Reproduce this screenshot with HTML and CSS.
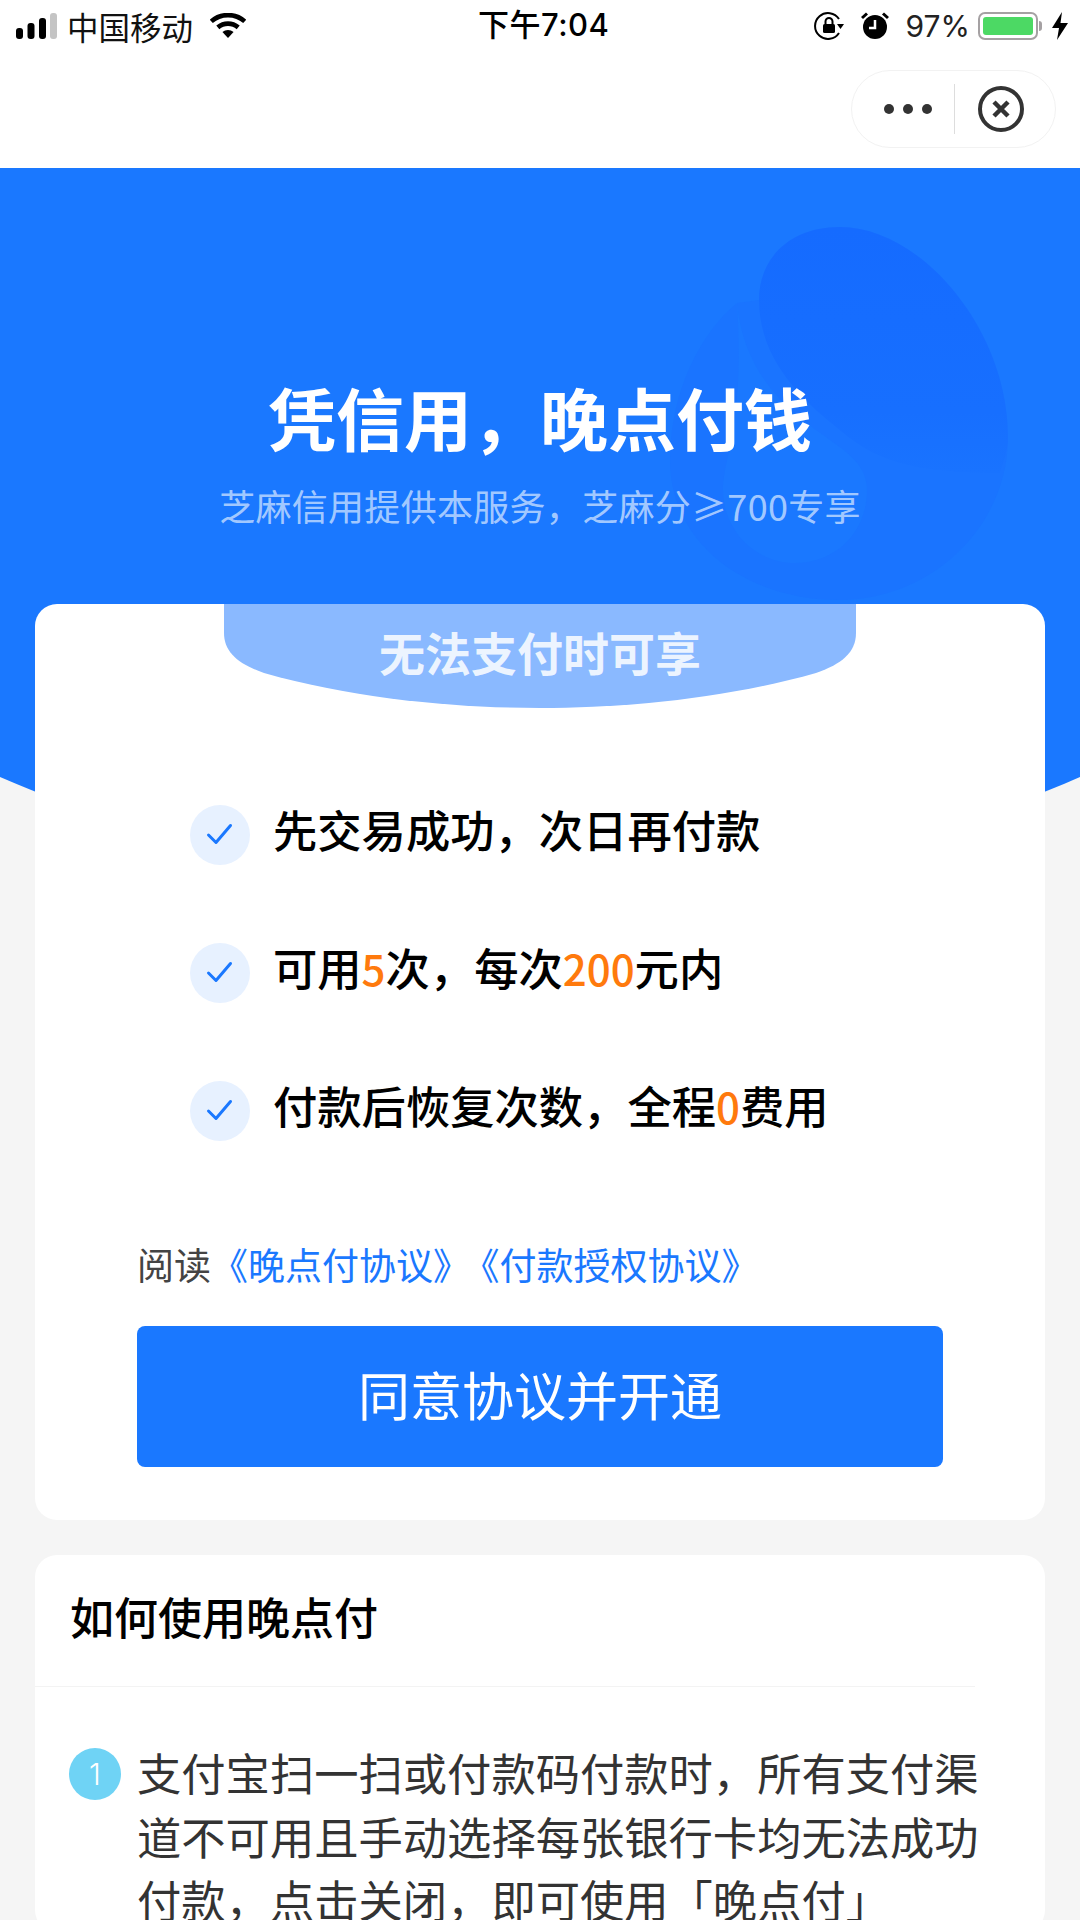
FILE: index.html
```html
<!DOCTYPE html>
<html lang="zh-CN">
<head>
  <meta charset="UTF-8">
  <meta name="viewport" content="width=device-width, initial-scale=1.0">
  <title>晚点付</title>
  <link rel="stylesheet" href="styles.css">
</head>
<body>
  <!-- Status bar -->
  <div class="status-bar">
    <div class="status-group">
      <svg class="signal" viewBox="0 0 41 26" width="41" height="26">
        <rect x="0" y="15" width="7" height="11" rx="3" fill="#000"/>
        <rect x="11.500" y="10" width="7" height="16" rx="3" fill="#000"/>
        <rect x="23" y="5" width="7" height="21" rx="3" fill="#000"/>
        <rect x="34" y="0" width="7" height="26" rx="3" fill="#c4c4c4"/>
      </svg>
      <span class="carrier">中国移动</span>
      <svg class="wifi" viewBox="0 0 38 28" width="36" height="26">
        <path d="M1 9C11 0 27 0 37 9" fill="none" stroke="#000" stroke-width="5"/>
        <path d="M8 15.500C14.500 10 23.500 10 30 15.500" fill="none" stroke="#000" stroke-width="5"/>
        <path d="M13 20.500C16.500 17.500 21.500 17.500 25 20.500L19 27Z" fill="#000"/>
      </svg>
    </div>
    <div class="clock">下午7:04</div>
    <div class="status-group status-right">
      <svg class="rotation-lock" viewBox="0 0 30 30" width="30" height="30">
        <path d="M25 8A13 13 0 1 0 25 22" fill="none" stroke="#000" stroke-width="2"/>
        <path d="M23 13H30L26.500 18Z" fill="#000"/>
        <rect x="9" y="13" width="12" height="9" rx="1.500" fill="#000"/>
        <path d="M11.500 13V10.500A3.500 3.500 0 0 1 18.500 10.500V13" fill="none" stroke="#000" stroke-width="2"/>
      </svg>
      <svg class="alarm" viewBox="0 0 28 30" width="28" height="30">
        <circle cx="14" cy="16" r="12" fill="#000"/>
        <path d="M14 9V17H8" fill="none" stroke="#fff" stroke-width="2.500"/>
        <path d="M1 7L6 2.500M27 7L22 2.500" stroke="#000" stroke-width="3"/>
      </svg>
      <span class="percent">97%</span>
      <div class="battery"><div class="battery-level"></div></div>
      <div class="battery-tip"></div>
      <svg class="bolt" viewBox="0 0 16 28" width="16" height="28">
        <path d="M10 0L0 16H7L5 28L16 11H8.500Z" fill="#000"/>
      </svg>
    </div>
  </div>

  <!-- Nav with capsule -->
  <div class="nav-bar">
    <div class="capsule">
      <div class="capsule-dots"><span></span><span></span><span></span></div>
      <div class="capsule-line"></div>
      <svg class="capsule-close" viewBox="0 0 46 46" width="46" height="46">
        <circle cx="23" cy="23" r="21" fill="none" stroke="#333" stroke-width="4"/>
        <path d="M16 16L30 30M30 16L16 30" stroke="#333" stroke-width="4.500"/>
      </svg>
    </div>
  </div>

  <!-- Hero -->
  <section class="hero">
    <svg class="hero-bg" viewBox="0 0 1080 708" width="1080" height="708">
      <defs>
        <linearGradient id="lobe" x1="0" y1="0" x2="0" y2="1">
          <stop offset="0" stop-color="#156bff"/>
          <stop offset="0.75" stop-color="#176fff"/>
          <stop offset="1" stop-color="#1973ff"/>
        </linearGradient>
      </defs>
      <path d="M0 609C190 692 360 708 540 708C720 708 890 692 1080 609V0H0Z" fill="#1a78ff"/>
      <!-- faint drop behind the title -->
      <path d="M737 135C700 165 670 225 670 292C670 375 745 432 840 432C930 432 1008 360 1008 269C1008 160 920 59 840 59C790 59 759 90 759 132Z" fill="#1a74ff"/>
      <path d="M737 135C742 190 770 225 800 250C835 278 867 290 867 322C867 365 835 395 795 395C755 395 723 362 723 322C723 290 745 255 737 135Z" fill="#1a78ff"/>
      <path d="M840 59C790 59 759 90 759 132C759 190 800 230 835 258C870 288 900 305 1000 305C1005 290 1008 280 1008 269C1008 160 920 59 840 59Z" fill="url(#lobe)"/>
    </svg>
    <h1 class="hero-title">凭信用，晚点付钱</h1>
    <p class="hero-sub">芝麻信用提供本服务，芝麻分≥700专享</p>
  </section>

  <!-- Main card -->
  <section class="card card-main">
    <div class="ribbon">无法支付时可享</div>
    <ul class="feature-list">
      <li class="feature">
        <svg class="check" viewBox="0 0 60 60" width="60" height="60">
          <circle cx="30" cy="30" r="30" fill="#e7f1ff"/>
          <path d="M18.500 30L26 37.500L40.500 20.500" fill="none" stroke="#1a78ff" stroke-width="3" stroke-linecap="round" stroke-linejoin="round"/>
        </svg>
        <span>先交易成功，次日再付款</span>
      </li>
      <li class="feature">
        <svg class="check" viewBox="0 0 60 60" width="60" height="60">
          <circle cx="30" cy="30" r="30" fill="#e7f1ff"/>
          <path d="M18.500 30L26 37.500L40.500 20.500" fill="none" stroke="#1a78ff" stroke-width="3" stroke-linecap="round" stroke-linejoin="round"/>
        </svg>
        <span>可用<em>5</em>次，每次<em>200</em>元内</span>
      </li>
      <li class="feature">
        <svg class="check" viewBox="0 0 60 60" width="60" height="60">
          <circle cx="30" cy="30" r="30" fill="#e7f1ff"/>
          <path d="M18.500 30L26 37.500L40.500 20.500" fill="none" stroke="#1a78ff" stroke-width="3" stroke-linecap="round" stroke-linejoin="round"/>
        </svg>
        <span>付款后恢复次数，全程<em>0</em>费用</span>
      </li>
    </ul>
    <p class="agreement">阅读<a href="#">《晚点付协议》</a><a href="#" class="agreement-next">《付款授权协议》</a></p>
    <button type="button" class="open-btn">同意协议并开通</button>
  </section>

  <!-- How to use -->
  <section class="card card-help">
    <h2 class="help-title">如何使用晚点付</h2>
    <div class="help-line"></div>
    <div class="step">
      <div class="step-num">1</div>
      <p class="step-text">支付宝扫一扫或付款码付款时，所有支付渠道不可用且手动选择每张银行卡均无法成功付款，点击关闭，即可使用「晚点付」</p>
    </div>
  </section>
</body>
</html>
```

FILE: styles.css
```css
* {
  box-sizing: border-box;
}

html, body {
  margin: 0;
  height: 1920px;
  overflow: hidden;
}

body {
  font-family: "Noto Sans CJK SC", "Noto Sans", sans-serif;
  background: #f5f5f5;
  color: #000;
}

/* Status bar */
.status-bar {
  position: relative;
  display: flex;
  align-items: center;
  justify-content: space-between;
  height: 56px;
  padding: 0 12px 4px 16px;
  background: #fff;
}

.status-group {
  display: flex;
  align-items: center;
}

.carrier {
  margin-left: 10px;
  font-size: 31.500px;
  line-height: 40px;
  color: #111;
}

.wifi {
  margin-left: 17px;
}

.clock {
  position: absolute;
  left: 478px;
  top: 3px;
  font-family: "Inter", "Noto Sans CJK SC", sans-serif;
  font-size: 31px;
  font-weight: 500;
  line-height: 44px;
  letter-spacing: 0.5px;
}

.rotation-lock {
  margin-right: 17px;
}

.alarm {
  margin-right: 17px;
}

.percent {
  margin-right: 8px;
  font-family: "Inter", sans-serif;
  font-size: 30px;
  color: #222;
}

.battery {
  width: 60px;
  height: 28px;
  padding: 3px;
  border: 2px solid #a5a1a3;
  border-radius: 7px;
}

.battery-level {
  height: 100%;
  background: #4cd964;
  border-radius: 3px;
}

.battery-tip {
  width: 3px;
  height: 10px;
  margin-left: 1px;
  background: #a5a1a3;
  border-radius: 0 3px 3px 0;
}

.bolt {
  margin-left: 10px;
}

/* Nav */
.nav-bar {
  display: flex;
  justify-content: flex-end;
  align-items: center;
  height: 112px;
  padding: 0 24px 6px 0;
  background: #fff;
}

.capsule {
  display: flex;
  align-items: center;
  width: 205px;
  height: 78px;
  padding-left: 32px;
  border: 1px solid #f2f2f2;
  border-radius: 39px;
}

.capsule-dots {
  display: flex;
  gap: 9px;
}

.capsule-dots span {
  width: 10px;
  height: 10px;
  background: #333;
  border-radius: 50%;
}

.capsule-line {
  width: 1px;
  height: 50px;
  margin-left: 22px;
  background: #ddd;
}

.capsule-close {
  margin-left: 23px;
}

/* Hero */
.hero {
  position: relative;
  height: 436px;
  padding-top: 209px;
  color: #fff;
  text-align: center;
}

.hero-bg {
  position: absolute;
  left: 0;
  top: 0;
}

.hero-title {
  position: relative;
  margin: 0;
  font-size: 68px;
  font-weight: 700;
  line-height: 80px;
}

.hero-sub {
  position: relative;
  margin: 23px 0 0;
  font-size: 36px;
  font-weight: 400;
  line-height: 50px;
  letter-spacing: 0.3px;
  color: rgba(255, 255, 255, 0.62);
}

/* Cards */
.card {
  position: relative;
  width: 1010px;
  margin: 0 auto;
  background: #fff;
  border-radius: 22px;
}

.card-main {
  height: 916px;
  padding: 0 102px;
}

.ribbon {
  width: 632px;
  height: 104px;
  margin: 0 auto;
  padding-top: 17px;
  font-size: 46px;
  font-weight: 700;
  line-height: 60px;
  text-align: center;
  color: rgba(255, 255, 255, 0.85);
  background: #8ab9ff;
  clip-path: path("M0 0H632V29C632 48 618 60 592 69C500 95 400 104 316 104C232 104 132 95 40 69C14 60 0 48 0 29Z");
}

.feature-list {
  display: flex;
  flex-direction: column;
  gap: 78px;
  margin: 97px 0 0;
  padding: 0 0 0 53px;
  list-style: none;
}

.feature {
  display: flex;
  align-items: center;
  gap: 23px;
  height: 60px;
  font-size: 44.300px;
  font-weight: 500;
}

.feature span {
  margin-bottom: 12px;
}

.feature em {
  font-size: 42px;
  font-style: normal;
  color: #ff7a0d;
}

.agreement {
  margin: 98px 0 0;
  font-size: 37px;
  line-height: 50px;
  color: #444;
}

.agreement a {
  color: #1a78ff;
  text-decoration: none;
}

.agreement-next {
  margin-left: 11px;
}

.open-btn {
  display: block;
  width: 100%;
  height: 141px;
  margin-top: 37px;
  padding-bottom: 7px;
  font-family: inherit;
  font-size: 52px;
  color: #fff;
  background: #1a78ff;
  border: none;
  border-radius: 8px;
}

.card-help {
  margin-top: 35px;
  padding-top: 31px;
}

.help-title {
  margin: 0;
  padding: 0 0 40px 35px;
  font-size: 44px;
  font-weight: 500;
  line-height: 60px;
}

.help-line {
  width: 940px;
  height: 1px;
  background: #f3f3f3;
}

.step {
  display: flex;
  gap: 16px;
  margin-top: 54px;
  padding-left: 34px;
}

.step-num {
  flex: none;
  width: 52px;
  height: 52px;
  margin-top: 7px;
  font-family: "Inter", sans-serif;
  font-size: 30px;
  font-weight: 300;
  line-height: 52px;
  text-align: center;
  color: #fff;
  background: #6fd3f5;
  border-radius: 50%;
}

.step-text {
  width: 848px;
  margin: 0;
  font-size: 44.300px;
  line-height: 63.500px;
  color: #333;
}
```
